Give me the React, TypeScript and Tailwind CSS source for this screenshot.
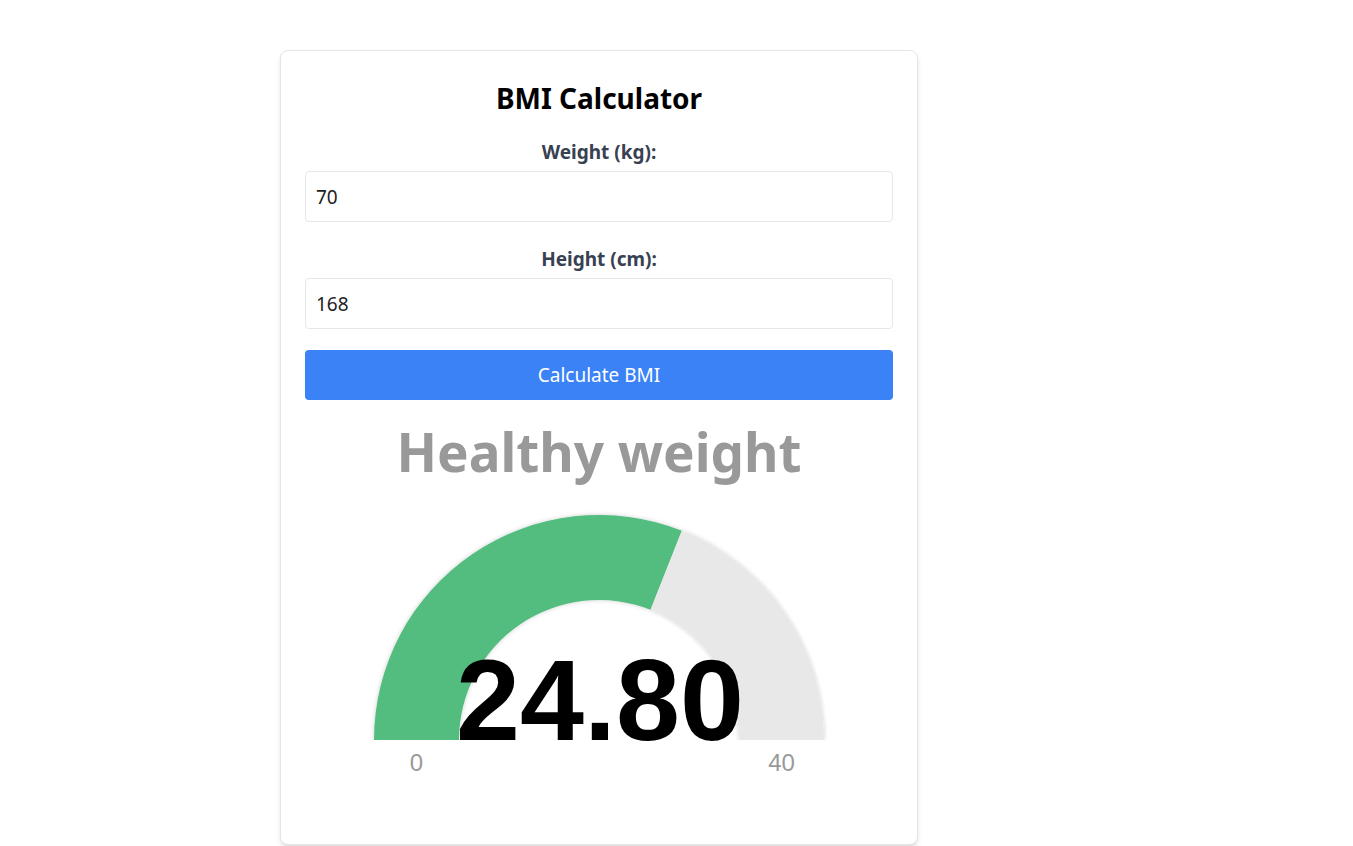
import { useState } from 'react'

const R = 225
const r = 140

function arcPoint (radius: number, fraction: number) {
  const phi = Math.PI * (1 - fraction)
  return [R + radius * Math.cos(phi), R - radius * Math.sin(phi)]
}

function Gauge ({ value, max }: { value: number, max: number }) {
  const f = Math.min(value / max, 1)
  const [ox, oy] = arcPoint(R, f)
  const [ix, iy] = arcPoint(r, f)
  const green = `M 0 ${R} A ${R} ${R} 0 0 1 ${ox} ${oy} L ${ix} ${iy} A ${r} ${r} 0 0 0 ${R - r} ${R} Z`
  const grey = `M ${ox} ${oy} A ${R} ${R} 0 0 1 ${2 * R} ${R} L ${R + r} ${R} A ${r} ${r} 0 0 0 ${ix} ${iy} Z`

  return (
    <svg width={450} height={270} viewBox="0 0 450 270" className="mx-auto block overflow-visible">
      <defs>
        <filter id="soft" x="-5%" y="-5%" width="110%" height="110%">
          <feDropShadow dx="0" dy="0" stdDeviation="2" floodColor="#000" floodOpacity="0.2" />
        </filter>
        <clipPath id="cut">
          <rect x="-10" y="-10" width="470" height={R + 10} />
        </clipPath>
      </defs>
      <g clipPath="url(#cut)" filter="url(#soft)">
        <path d={green} fill="#52bc7f" />
        <path d={grey} fill="#e9e8e9" />
      </g>
      <text
        x={226}
        y={R}
        textAnchor="middle"
        fontFamily="'Liberation Sans', Arial, sans-serif"
        fontWeight={700}
        fontSize={115}
        fill="#000"
      >
        {value.toFixed(2)}
      </text>
      <text x={42.5} y={256} textAnchor="middle" fontFamily="'Liberation Sans', Arial, sans-serif" fontSize={24} fill="#9a9a9a">0</text>
      <text x={407.5} y={256} textAnchor="middle" fontFamily="'Liberation Sans', Arial, sans-serif" fontSize={24} fill="#9a9a9a">{max}</text>
    </svg>
  )
}

export default function App () {
  const [weight, setWeight] = useState('70')
  const [height, setHeight] = useState('168')
  const bmi = 24.8

  return (
    <main className="min-h-screen bg-white pl-[280px] pt-[50px] font-['Noto_Sans',sans-serif]">
      <div className="w-[638px] h-[795px] rounded-lg border border-[#e5e5e5] bg-white px-6 pt-[31px] shadow-md">
        <h1 className="mb-[26px] text-center text-[28px] font-bold leading-8 text-black">BMI Calculator</h1>

        <label className="mb-[7px] block text-center text-[19px] font-bold leading-6 text-[#374151]">Weight (kg):</label>
        <input
          value={weight}
          onChange={(e) => setWeight(e.target.value)}
          className="mb-[25px] block h-[51px] w-full rounded border border-[#e5e7eb] px-[10px] text-[19px] text-[#222] outline-none"
        />

        <label className="mb-[7px] block text-center text-[19px] font-bold leading-6 text-[#374151]">Height (cm):</label>
        <input
          value={height}
          onChange={(e) => setHeight(e.target.value)}
          className="mb-[21px] block h-[51px] w-full rounded border border-[#e5e7eb] px-[10px] text-[19px] text-[#222] outline-none"
        />

        <button className="block h-[50px] w-full rounded bg-[#3b82f6] text-[19px] text-white">
          Calculate BMI
        </button>

        <p className="mt-[22px] text-center text-[53px] font-bold leading-[60px] text-[#999999]">Healthy weight</p>

        <div className="mt-[33px]">
          <Gauge value={bmi} max={40} />
        </div>
      </div>
    </main>
  )
}
